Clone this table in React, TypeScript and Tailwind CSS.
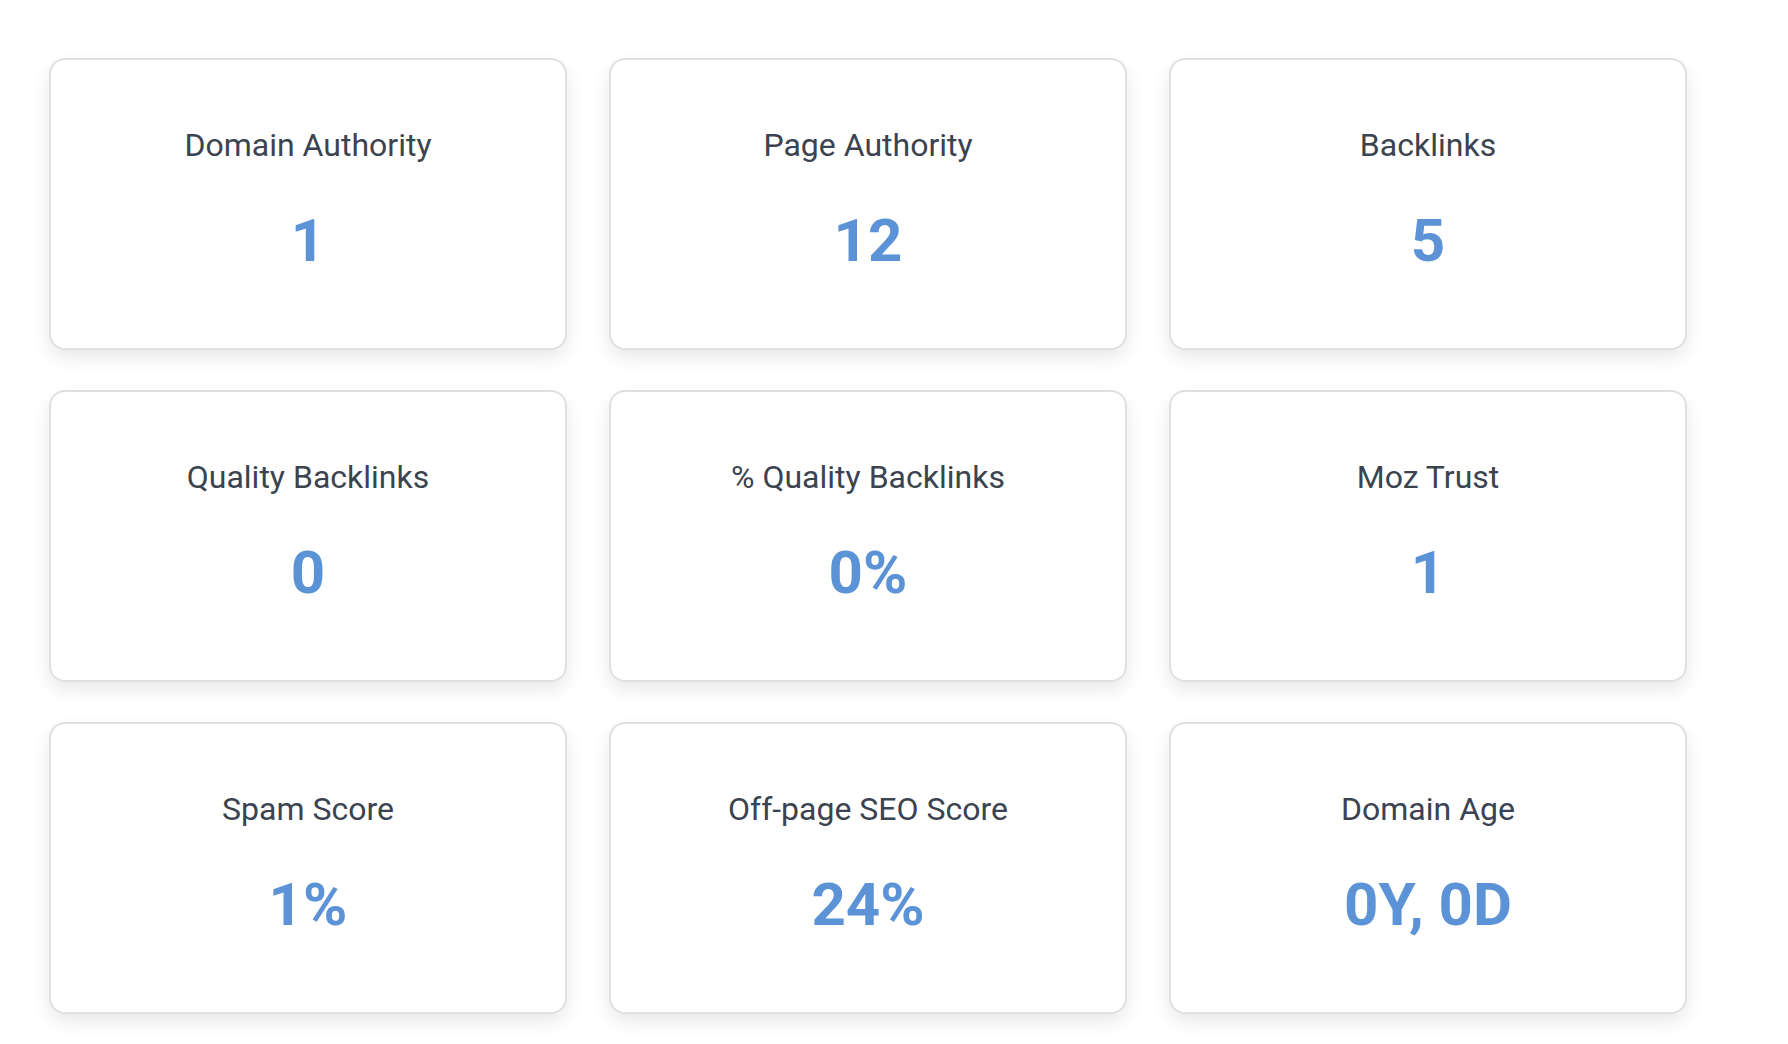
const METRICS = [
  { label: "Domain Authority", value: "1" },
  { label: "Page Authority", value: "12" },
  { label: "Backlinks", value: "5" },
  { label: "Quality Backlinks", value: "0" },
  { label: "% Quality Backlinks", value: "0%" },
  { label: "Moz Trust", value: "1" },
  { label: "Spam Score", value: "1%" },
  { label: "Off-page SEO Score", value: "24%" },
  { label: "Domain Age", value: "0Y, 0D" },
]

/* ─── Metric card ─────────────────────────────────────────────── */

function MetricCard({ label, value }: { label: string; value: string }) {
  return (
    <div className="flex h-[292px] flex-col items-center rounded-[16px] border-2 border-[#e0e0e0] bg-white pt-[66px] shadow-[0_8px_18px_rgba(0,0,0,0.09)]">
      <h3 className="text-[32px] leading-[38px] font-normal text-[#3b4350]">{label}</h3>
      <p className="mt-[47px] text-[60px] leading-none font-bold text-[#5b93d6]">{value}</p>
    </div>
  )
}

export default function App() {
  return (
    <div className="min-h-screen bg-white pt-[58px] pl-[49px] font-['Roboto',sans-serif]">
      <div className="grid w-[1638px] grid-cols-3 gap-x-[42px] gap-y-[40px]">
        {METRICS.map((m) => (
          <MetricCard key={m.label} label={m.label} value={m.value} />
        ))}
      </div>
    </div>
  )
}
